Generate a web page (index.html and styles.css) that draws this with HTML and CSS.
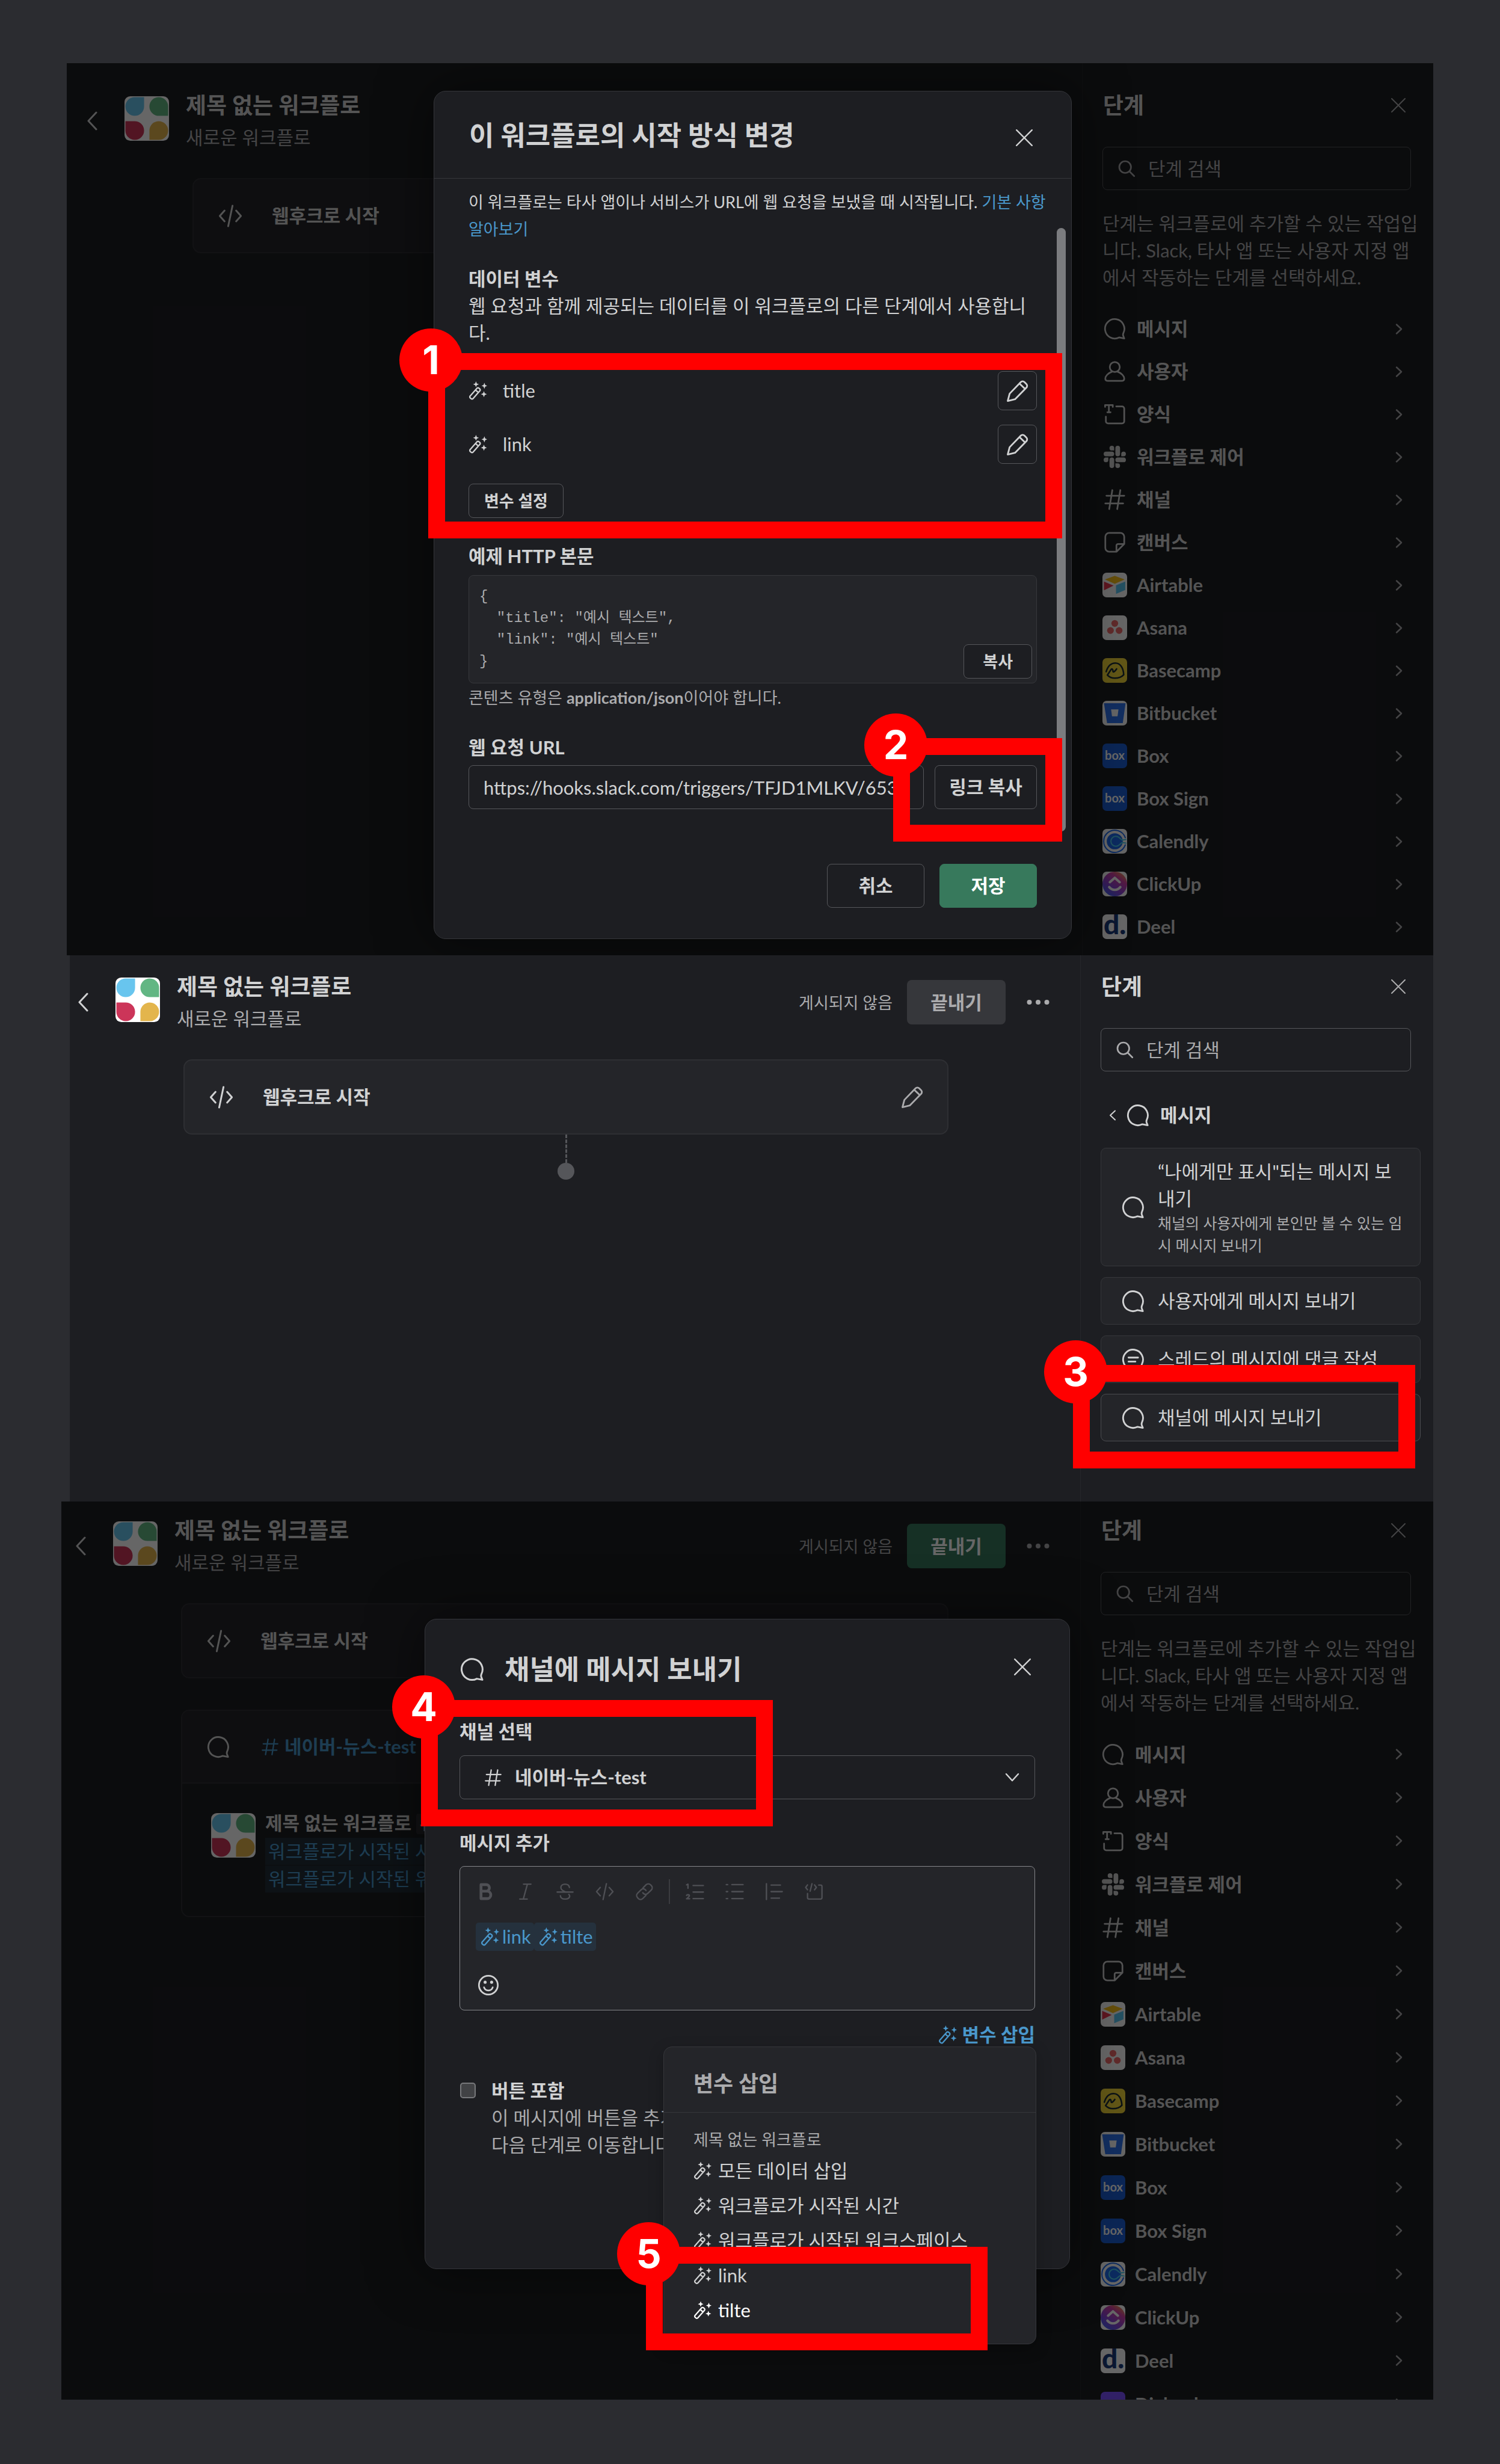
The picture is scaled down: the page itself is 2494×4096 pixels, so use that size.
FILE: index.html
```html
<!DOCTYPE html>
<html lang="ko">
<head>
<meta charset="utf-8">
<meta name="viewport" content="width=device-width, initial-scale=1">
<title>Slack 워크플로 설정</title>
<link rel="stylesheet" href="styles.css">
</head>
<body>
<svg class="sprite" aria-hidden="true">
  <symbol id="i-back" viewBox="0 0 20 32"><path d="M17 2 4 16l13 14"/></symbol>
  <symbol id="i-next" viewBox="0 0 12 20"><path d="m2 2.500 8 7.500-8 7.500"/></symbol>
  <symbol id="i-down" viewBox="0 0 24 16"><path d="m2 2 10 11L22 2"/></symbol>
  <symbol id="i-close" viewBox="0 0 24 24"><path d="m1 1 22 22M23 1 1 23"/></symbol>
  <symbol id="i-search" viewBox="0 0 20 20"><circle cx="8.500" cy="8.500" r="6.500"/><path d="m13.500 13.500 5 5"/></symbol>
  <symbol id="i-code" viewBox="0 0 20 20"><path d="M5.200 5.500 1.200 10l4 4.500M14.800 5.500l4 4.500-4 4.500M11.800 1.500 8.200 18.500"/></symbol>
  <symbol id="i-bubble" viewBox="0 0 20 20"><path d="m18.500 18.700-4.600-.9A8.700 8.700 0 1 1 17.700 14c-.4.900-.4 1.500-.1 2.400z"/></symbol>
  <symbol id="i-thread" viewBox="0 0 20 20"><path d="m18.500 18.700-4.600-.9A8.700 8.700 0 1 1 17.700 14c-.4.900-.4 1.500-.1 2.400z"/><path d="M6 8.300h8.300M6 11.800h6"/></symbol>
  <symbol id="i-user" viewBox="0 0 20 20"><circle cx="10" cy="6" r="4.500"/><path d="M7.500 10.200C4 11.500 1.500 14 1.500 16.500c0 1.300 1 2 2.500 2h12c1.500 0 2.500-.7 2.500-2 0-2.500-2.500-5-6-6.300"/></symbol>
  <symbol id="i-form" viewBox="0 0 20 20"><path d="M1.300 3.500V1.800h6.900v1.700M4.700 1.800v6.400M3.300 8.300h2.900M11.300 3h5.200a2 2 0 0 1 2 2v11.300a2 2 0 0 1-2 2H4a2 2 0 0 1-2-2v-4.100"/></symbol>
  <symbol id="i-slack" viewBox="0 0 24 24"><path class="solid" d="M5.042 15.165a2.528 2.528 0 0 1-2.520 2.523A2.528 2.528 0 0 1 0 15.165a2.527 2.527 0 0 1 2.522-2.520h2.520v2.520zM6.313 15.165a2.527 2.527 0 0 1 2.521-2.520 2.527 2.527 0 0 1 2.521 2.520v6.313A2.528 2.528 0 0 1 8.834 24a2.528 2.528 0 0 1-2.521-2.522v-6.313zM8.834 5.042a2.528 2.528 0 0 1-2.521-2.520A2.528 2.528 0 0 1 8.834 0a2.528 2.528 0 0 1 2.521 2.522v2.520H8.834zM8.834 6.313a2.528 2.528 0 0 1 2.521 2.521 2.528 2.528 0 0 1-2.521 2.521H2.522A2.528 2.528 0 0 1 0 8.834a2.528 2.528 0 0 1 2.522-2.521h6.312zM18.956 8.834a2.528 2.528 0 0 1 2.522-2.521A2.528 2.528 0 0 1 24 8.834a2.528 2.528 0 0 1-2.522 2.521h-2.522V8.834zM17.688 8.834a2.528 2.528 0 0 1-2.523 2.521 2.527 2.527 0 0 1-2.520-2.521V2.522A2.527 2.527 0 0 1 15.165 0a2.528 2.528 0 0 1 2.523 2.522v6.312zM15.165 18.956a2.528 2.528 0 0 1 2.523 2.522A2.528 2.528 0 0 1 15.165 24a2.527 2.527 0 0 1-2.520-2.522v-2.522h2.520zM15.165 17.688a2.527 2.527 0 0 1-2.520-2.523 2.526 2.526 0 0 1 2.520-2.520h6.313A2.527 2.527 0 0 1 24 15.165a2.528 2.528 0 0 1-2.522 2.523h-6.313z"/></symbol>
  <symbol id="i-hash" viewBox="0 0 20 20"><path d="M7.800 1.500 5 18.500M15 1.500l-2.800 17M2.500 6.500h16M1.500 13.500h16"/></symbol>
  <symbol id="i-canvas" viewBox="0 0 20 20"><path d="M18.500 11.500V5a3.500 3.500 0 0 0-3.500-3.500H5A3.500 3.500 0 0 0 1.500 5v10A3.500 3.500 0 0 0 5 18.500h6.500l7-7H13a1.500 1.500 0 0 0-1.500 1.500v5.500"/></symbol>
  <symbol id="i-wand" viewBox="0 0 20 20"><path d="M1.800 15.600 9 7.400a1.500 1.500 0 0 1 2.200-.1l.8.700a1.500 1.500 0 0 1 .1 2.200L4.900 18.400a1.500 1.500 0 0 1-2.200.1l-.8-.7a1.500 1.500 0 0 1-.1-2.200zM7.600 9.200l2.900 2.600"/><path class="solid" d="M8 0l.9 2.200 2.200.9-2.200.9L8 6.200 7.100 4l-2.200-.9 2.200-.9zM17 1.500l.9 2.300 2.100.9-2.100.9L17 8l-.9-2.400-2.200-.9 2.200-.9zM16.500 10.500l.9 2.300 2.300.9-2.300.9-.9 2.300-.9-2.300-2.300-.9 2.300-.9z"/></symbol>
  <symbol id="i-pencil" viewBox="0 0 20 20"><path d="M3 12.300 12.700 2.200a2.300 2.300 0 0 1 3.300 0l1.600 1.600a2.300 2.300 0 0 1 0 3.300L7.700 17.200 1.300 18.700zM11.700 3.500l4.800 4.700"/></symbol>
  <symbol id="i-dots" viewBox="0 0 40 10"><g class="solid"><circle cx="5.500" cy="5" r="4"/><circle cx="20" cy="5" r="4"/><circle cx="34.500" cy="5" r="4"/></g></symbol>
  <symbol id="i-bold" viewBox="0 0 20 20"><path d="M5 2.500v15h6.500a4 4 0 0 0 0-8H5h5.500a3.500 3.500 0 0 0 0-7z"/></symbol>
  <symbol id="i-italic" viewBox="0 0 20 20"><path d="M8 2h8M4 18h8M12.200 2 7.800 18"/></symbol>
  <symbol id="i-strike" viewBox="0 0 20 20"><path d="M14.700 5.500C14.300 3.200 12.500 2 10 2 7.300 2 5.500 3.500 5.500 5.700c0 2.400 2 3.500 4.500 4.300M1.500 10.500h17M14 13c.8.700 1 1.200 1 2-.3 2-2.200 3-5 3s-4.800-1.300-5-3.600"/></symbol>
  <symbol id="i-link" viewBox="0 0 20 20"><path d="m8.300 6.200 3.400-3.500a3.400 3.400 0 0 1 4.900 0l.7.800a3.400 3.400 0 0 1 0 4.800l-3.700 3.600a3.400 3.400 0 0 1-4.800 0l-.6-.7M11.600 14l-3.400 3.400a3.400 3.400 0 0 1-4.800 0l-.8-.9a3.400 3.400 0 0 1 0-4.700l3.700-3.700a3.400 3.400 0 0 1 4.800 0l.6.700"/></symbol>
  <symbol id="i-ol" viewBox="0 0 20 20"><path d="M8 3.500h11M8 10.500h11M8 17.500h11M1 2.700 2.500 2v4.500M1 14c.8-1 3-.8 3 .4 0 1-1.300 1.800-3 3.300h3.300"/></symbol>
  <symbol id="i-ul" viewBox="0 0 20 20"><path d="M7 2.500h12M7 10h12M7 17.500h12M1 2.500h1.500M1 10h1.500M1 17.500h1.500"/></symbol>
  <symbol id="i-quote" viewBox="0 0 20 20"><path d="M1.500 1.500v17M6.500 3h10M6.500 10h12M6.500 17h9"/></symbol>
  <symbol id="i-block" viewBox="0 0 20 20"><path d="M3 2.800 1 5.500 3 8M10.500 2.800l2 2.700-2 2.500M7.800 1.500 5.800 9.500M15 3h2a1.500 1.500 0 0 1 1.500 1.500v12A1.500 1.500 0 0 1 17 18H4.500A1.500 1.500 0 0 1 3 16.500V12"/></symbol>
  <symbol id="i-smile" viewBox="0 0 20 20"><circle cx="10" cy="10" r="8.700"/><path d="M6 12c.6 1.900 2.100 2.900 4 2.900s3.400-1 4-2.900"/><g class="solid"><circle cx="7" cy="7.300" r="1.400"/><circle cx="13" cy="7.300" r="1.400"/></g></symbol>
  <symbol id="logo" viewBox="0 0 100 100"><rect width="100" height="100" rx="13" fill="#fff"/><path fill="#68c5ee" d="M23 2h21v21a21 21 0 1 1-21-21z"/><path fill="#62b683" d="M77 2a21 21 0 0 1 21 21v21H77a21 21 0 0 1 0-42z"/><path fill="#cc3559" d="M2 56h20a21 21 0 1 1-20 21z"/><path fill="#e3b54c" d="M77 56a21 21 0 1 1 0 42H56V77a21 21 0 0 1 21-21z"/></symbol>
  <symbol id="a-airtable" viewBox="0 0 40 40"><rect width="40" height="40" fill="#fff"/><path fill="#fcc21b" d="M4 11 20 5l16 6-16 7z"/><path fill="#5ac8f5" d="M22 20.500 37 14.500V28l-15 6.500z"/><path fill="#e8384f" d="M2.500 14.500 18 21 2.500 28.500z"/></symbol>
  <symbol id="a-asana" viewBox="0 0 40 40"><rect width="40" height="40" fill="#fff"/><g fill="#f06a6a"><circle cx="20" cy="13" r="5.500"/><circle cx="13" cy="24.500" r="5.500"/><circle cx="27" cy="24.500" r="5.500"/></g></symbol>
  <symbol id="a-basecamp" viewBox="0 0 40 40"><rect width="40" height="40" fill="#f5d93a"/><path fill="none" stroke="#1d2d35" stroke-width="2.500" stroke-linecap="round" stroke-linejoin="round" d="M6 22C9 12 15 8 21 8c8 0 13 8 13.500 19C31 31 26 32.500 20 32.500S11 31 8 27.500l6-9c2-2 3 0 3 2.500s2 2 6-3.500"/></symbol>
  <symbol id="a-bitbucket" viewBox="0 0 40 40"><rect width="40" height="40" fill="#fff"/><path fill="#2f74f0" d="M2.500 4h35l-4.500 32H7.500z"/><path fill="#fff" d="M14 14h12l-1.500 11h-9z"/></symbol>
  <symbol id="a-calendly" viewBox="0 0 40 40"><rect width="40" height="40" fill="#fff"/><circle cx="20" cy="20" r="13" fill="#1f6cf0"/><path fill="none" stroke="#1f6cf0" stroke-width="2" d="M37 14A18 18 0 1 0 37 26"/><path fill="none" stroke="#4fd0ee" stroke-width="2" d="m38 17-6 1-5-4a8 8 0 1 0 0 12l5-4 6 1"/></symbol>
  <symbol id="a-clickup" viewBox="0 0 40 40"><linearGradient id="cu" x1="1" y1="0" x2="0.300" y2="1"><stop offset="0" stop-color="#ffb02e"/><stop offset=".35" stop-color="#d13fa8"/><stop offset=".7" stop-color="#8a45d8"/><stop offset="1" stop-color="#4a5cf0"/></linearGradient><rect width="40" height="40" fill="#fff"/><circle cx="20" cy="20" r="20" fill="url(#cu)"/><path fill="none" stroke="#fff" stroke-width="4" d="m12 17 8-7 8 7M11 25c5 6 13 6 18 0"/></symbol>
</svg>

<main class="guide">

<section class="panel panel-one">
  <div class="canvas">
    <header class="flow-head">
      <button class="icon-btn back" aria-label="뒤로"><svg><use href="#i-back"/></svg></button>
      <svg class="flow-logo"><use href="#logo"/></svg>
      <div class="flow-name"><h2>제목 없는 워크플로</h2><p>새로운 워크플로</p></div>
    </header>
    <div class="cards">
      <article class="card"><div class="card-row"><svg class="card-icon"><use href="#i-code"/></svg><strong>웹후크로 시작</strong></div></article>
    </div>
  </div>
  <aside class="side">
    <div class="side-head"><h3>단계</h3><button class="icon-btn close" aria-label="닫기"><svg><use href="#i-close"/></svg></button></div>
    <label class="search"><svg><use href="#i-search"/></svg><input type="search" aria-label="단계 검색" placeholder="단계 검색"></label>
    <p class="side-text">단계는 워크플로에 추가할 수 있는 작업입니다. Slack, 타사 앱 또는 사용자 지정 앱에서 작동하는 단계를 선택하세요.</p>
    <ul class="steps">
      <li><span class="glyph"><svg><use href="#i-bubble"/></svg></span>메시지<svg class="next"><use href="#i-next"/></svg></li>
      <li><span class="glyph"><svg><use href="#i-user"/></svg></span>사용자<svg class="next"><use href="#i-next"/></svg></li>
      <li><span class="glyph"><svg><use href="#i-form"/></svg></span>양식<svg class="next"><use href="#i-next"/></svg></li>
      <li><span class="glyph"><svg><use href="#i-slack"/></svg></span>워크플로 제어<svg class="next"><use href="#i-next"/></svg></li>
      <li><span class="glyph"><svg><use href="#i-hash"/></svg></span>채널<svg class="next"><use href="#i-next"/></svg></li>
      <li><span class="glyph"><svg><use href="#i-canvas"/></svg></span>캔버스<svg class="next"><use href="#i-next"/></svg></li>
      <li><svg class="app"><use href="#a-airtable"/></svg>Airtable<svg class="next"><use href="#i-next"/></svg></li>
      <li><svg class="app"><use href="#a-asana"/></svg>Asana<svg class="next"><use href="#i-next"/></svg></li>
      <li><svg class="app"><use href="#a-basecamp"/></svg>Basecamp<svg class="next"><use href="#i-next"/></svg></li>
      <li><svg class="app"><use href="#a-bitbucket"/></svg>Bitbucket<svg class="next"><use href="#i-next"/></svg></li>
      <li><span class="app app-box">box</span>Box<svg class="next"><use href="#i-next"/></svg></li>
      <li><span class="app app-box">box</span>Box Sign<svg class="next"><use href="#i-next"/></svg></li>
      <li><svg class="app"><use href="#a-calendly"/></svg>Calendly<svg class="next"><use href="#i-next"/></svg></li>
      <li><svg class="app"><use href="#a-clickup"/></svg>ClickUp<svg class="next"><use href="#i-next"/></svg></li>
      <li><span class="app app-deel">d.</span>Deel<svg class="next"><use href="#i-next"/></svg></li>
    </ul>
  </aside>
  <div class="overlay">
    <div class="modal modal-start" role="dialog" aria-labelledby="m1">
      <header class="modal-head ruled"><h1 id="m1">이 워크플로의 시작 방식 변경</h1><button class="icon-btn close big" aria-label="닫기"><svg><use href="#i-close"/></svg></button></header>
      <div class="modal-body">
        <p class="small intro">이 워크플로는 타사 앱이나 서비스가 URL에 웹 요청을 보냈을 때 시작됩니다. <a href="#basics">기본 사항 알아보기</a></p>
        <h4 class="label gap-top">데이터 변수</h4>
        <p class="text">웹 요청과 함께 제공되는 데이터를 이 워크플로의 다른 단계에서 사용합니다.</p>
        <ul class="vars">
          <li><svg class="wand"><use href="#i-wand"/></svg><span>title</span><button class="btn edit" aria-label="title 편집"><svg><use href="#i-pencil"/></svg></button></li>
          <li><svg class="wand"><use href="#i-wand"/></svg><span>link</span><button class="btn edit" aria-label="link 편집"><svg><use href="#i-pencil"/></svg></button></li>
        </ul>
        <button class="btn btn-small">변수 설정</button>
        <h4 class="label gap-example">예제 HTTP 본문</h4>
        <div class="code-box"><pre>{
  "title": "예시 텍스트",
  "link": "예시 텍스트"
}</pre><button class="btn btn-small btn-copy">복사</button></div>
        <p class="small note">콘텐츠 유형은 <strong>application/json</strong>이어야 합니다.</p>
        <label class="label gap-top" for="hook-url">웹 요청 URL</label>
        <div class="url-row"><input id="hook-url" class="field" type="text" readonly value="https://hooks.slack.com/triggers/TFJD1MLKV/653"><button class="btn btn-link">링크 복사</button></div>
      </div>
      <footer class="modal-foot"><button class="btn wide">취소</button><button class="btn wide primary">저장</button></footer>
      <div class="scrollbar"></div>
      <div class="callout callout-1"><span>1</span></div>
      <div class="callout callout-2"><span>2</span></div>
    </div>
  </div>
</section>

<section class="panel panel-two">
  <div class="canvas">
    <header class="flow-head">
      <button class="icon-btn back" aria-label="뒤로"><svg><use href="#i-back"/></svg></button>
      <svg class="flow-logo"><use href="#logo"/></svg>
      <div class="flow-name"><h2>제목 없는 워크플로</h2><p>새로운 워크플로</p></div>
      <div class="flow-actions"><span class="status">게시되지 않음</span><button class="finish" disabled>끝내기</button><button class="icon-btn more" aria-label="더 보기"><svg><use href="#i-dots"/></svg></button></div>
    </header>
    <div class="cards">
      <article class="card"><div class="card-row"><svg class="card-icon"><use href="#i-code"/></svg><strong>웹후크로 시작</strong><button class="icon-btn card-edit" aria-label="편집"><svg><use href="#i-pencil"/></svg></button></div></article>
      <div class="connector"><i></i><b></b></div>
    </div>
  </div>
  <aside class="side">
    <div class="side-head"><h3>단계</h3><button class="icon-btn close" aria-label="닫기"><svg><use href="#i-close"/></svg></button></div>
    <label class="search"><svg><use href="#i-search"/></svg><input type="search" aria-label="단계 검색" placeholder="단계 검색"></label>
    <div class="crumb"><svg class="prev"><use href="#i-next"/></svg><svg class="ico"><use href="#i-bubble"/></svg>메시지</div>
    <ul class="options">
      <li><svg class="ico"><use href="#i-bubble"/></svg><div>“나에게만 표시"되는 메시지 보내기<small>채널의 사용자에게 본인만 볼 수 있는 임시 메시지 보내기</small></div></li>
      <li><svg class="ico"><use href="#i-bubble"/></svg><div>사용자에게 메시지 보내기</div></li>
      <li><svg class="ico"><use href="#i-thread"/></svg><div>스레드의 메시지에 댓글 작성</div></li>
      <li class="current"><svg class="ico"><use href="#i-bubble"/></svg><div>채널에 메시지 보내기</div></li>
    </ul>
    <div class="callout callout-3"><span>3</span></div>
  </aside>
</section>

<section class="panel panel-three">
  <div class="canvas">
    <header class="flow-head">
      <button class="icon-btn back" aria-label="뒤로"><svg><use href="#i-back"/></svg></button>
      <svg class="flow-logo"><use href="#logo"/></svg>
      <div class="flow-name"><h2>제목 없는 워크플로</h2><p>새로운 워크플로</p></div>
      <div class="flow-actions"><span class="status">게시되지 않음</span><button class="finish ready">끝내기</button><button class="icon-btn more" aria-label="더 보기"><svg><use href="#i-dots"/></svg></button></div>
    </header>
    <div class="cards">
      <article class="card"><div class="card-row"><svg class="card-icon"><use href="#i-code"/></svg><strong>웹후크로 시작</strong></div></article>
      <article class="card card-message">
        <div class="card-row"><svg class="card-icon"><use href="#i-bubble"/></svg><strong><a href="#channel"><svg class="hash"><use href="#i-hash"/></svg>네이버-뉴스-test</a> 에</strong></div>
        <div class="preview">
          <svg class="flow-logo"><use href="#logo"/></svg>
          <div><p class="sender">제목 없는 워크플로 <em>워크플로</em></p><p class="token">워크플로가 시작된 시간</p><p class="token">워크플로가 시작된 워크</p></div>
        </div>
      </article>
    </div>
  </div>
  <aside class="side">
    <div class="side-head"><h3>단계</h3><button class="icon-btn close" aria-label="닫기"><svg><use href="#i-close"/></svg></button></div>
    <label class="search"><svg><use href="#i-search"/></svg><input type="search" aria-label="단계 검색" placeholder="단계 검색"></label>
    <p class="side-text">단계는 워크플로에 추가할 수 있는 작업입니다. Slack, 타사 앱 또는 사용자 지정 앱에서 작동하는 단계를 선택하세요.</p>
    <ul class="steps">
      <li><span class="glyph"><svg><use href="#i-bubble"/></svg></span>메시지<svg class="next"><use href="#i-next"/></svg></li>
      <li><span class="glyph"><svg><use href="#i-user"/></svg></span>사용자<svg class="next"><use href="#i-next"/></svg></li>
      <li><span class="glyph"><svg><use href="#i-form"/></svg></span>양식<svg class="next"><use href="#i-next"/></svg></li>
      <li><span class="glyph"><svg><use href="#i-slack"/></svg></span>워크플로 제어<svg class="next"><use href="#i-next"/></svg></li>
      <li><span class="glyph"><svg><use href="#i-hash"/></svg></span>채널<svg class="next"><use href="#i-next"/></svg></li>
      <li><span class="glyph"><svg><use href="#i-canvas"/></svg></span>캔버스<svg class="next"><use href="#i-next"/></svg></li>
      <li><svg class="app"><use href="#a-airtable"/></svg>Airtable<svg class="next"><use href="#i-next"/></svg></li>
      <li><svg class="app"><use href="#a-asana"/></svg>Asana<svg class="next"><use href="#i-next"/></svg></li>
      <li><svg class="app"><use href="#a-basecamp"/></svg>Basecamp<svg class="next"><use href="#i-next"/></svg></li>
      <li><svg class="app"><use href="#a-bitbucket"/></svg>Bitbucket<svg class="next"><use href="#i-next"/></svg></li>
      <li><span class="app app-box">box</span>Box<svg class="next"><use href="#i-next"/></svg></li>
      <li><span class="app app-box">box</span>Box Sign<svg class="next"><use href="#i-next"/></svg></li>
      <li><svg class="app"><use href="#a-calendly"/></svg>Calendly<svg class="next"><use href="#i-next"/></svg></li>
      <li><svg class="app"><use href="#a-clickup"/></svg>ClickUp<svg class="next"><use href="#i-next"/></svg></li>
      <li><span class="app app-deel">d.</span>Deel<svg class="next"><use href="#i-next"/></svg></li>
      <li><span class="app app-dialpad"></span>Dialpad<svg class="next"><use href="#i-next"/></svg></li>
    </ul>
  </aside>
  <div class="overlay">
    <div class="modal modal-message" role="dialog" aria-labelledby="m2">
      <header class="modal-head"><svg class="ico"><use href="#i-bubble"/></svg><h1 id="m2">채널에 메시지 보내기</h1><button class="icon-btn close big" aria-label="닫기"><svg><use href="#i-close"/></svg></button></header>
      <div class="modal-body">
        <label class="label" for="channel-select">채널 선택</label>
        <div class="select"><svg class="hash"><use href="#i-hash"/></svg><select id="channel-select"><option>네이버-뉴스-test</option></select><svg class="caret"><use href="#i-down"/></svg></div>
        <h4 class="label" id="msg-label">메시지 추가</h4>
        <div class="editor">
          <div class="toolbar">
            <button aria-label="굵게"><svg class="heavy"><use href="#i-bold"/></svg></button>
            <button aria-label="기울임꼴"><svg><use href="#i-italic"/></svg></button>
            <button aria-label="취소선"><svg><use href="#i-strike"/></svg></button>
            <button aria-label="코드"><svg><use href="#i-code"/></svg></button>
            <button aria-label="링크"><svg><use href="#i-link"/></svg></button>
            <span class="rule"></span>
            <button aria-label="번호 목록"><svg><use href="#i-ol"/></svg></button>
            <button aria-label="글머리 기호 목록"><svg><use href="#i-ul"/></svg></button>
            <button aria-label="인용"><svg><use href="#i-quote"/></svg></button>
            <button aria-label="코드 블록"><svg><use href="#i-block"/></svg></button>
          </div>
          <div class="chips" role="textbox" aria-labelledby="msg-label"><span><svg class="wand"><use href="#i-wand"/></svg>link</span><span><svg class="wand"><use href="#i-wand"/></svg>tilte</span></div>
          <button class="icon-btn emoji" aria-label="이모티콘"><svg><use href="#i-smile"/></svg></button>
        </div>
        <div class="insert">
          <button class="insert-link"><svg class="wand"><use href="#i-wand"/></svg>변수 삽입</button>
          <div class="popover">
            <h5>변수 삽입</h5>
            <div class="menu">
              <p>제목 없는 워크플로</p>
              <ul>
                <li><svg class="wand"><use href="#i-wand"/></svg>모든 데이터 삽입</li>
                <li><svg class="wand"><use href="#i-wand"/></svg>워크플로가 시작된 시간</li>
                <li><svg class="wand"><use href="#i-wand"/></svg>워크플로가 시작된 워크스페이스</li>
                <li><svg class="wand"><use href="#i-wand"/></svg>link</li>
                <li class="active"><svg class="wand"><use href="#i-wand"/></svg>tilte</li>
              </ul>
            </div>
          </div>
        </div>
        <div class="check"><input type="checkbox" id="with-button"><div><label for="with-button">버튼 포함</label><p>이 메시지에 버튼을 추가합니다.<br>다음 단계로 이동합니다.</p></div></div>
      </div>
      <div class="callout callout-4"><span>4</span></div>
      <div class="callout callout-5"><span>5</span></div>
    </div>
  </div>
</section>

</main>
</body>
</html>
```

FILE: styles.css
```css
:root {
  --page: #2b2c30;
  --panel: #1d1e22;
  --raised: #242529;
  --line: #36373b;
  --field-line: #56575b;
  --text: #d1d2d3;
  --muted: #ababad;
  --blue: #4a98cc;
  --green: #37795c;
  --red: #ff0000;
}

* { box-sizing: border-box; }

body {
  margin: 0;
  background: var(--page);
  color: var(--text);
  font: 31px/45px Lato, "Noto Sans CJK KR", sans-serif;
}

h1, h2, h3, h4, h5, p, ul, pre { margin: 0; padding: 0; }
ul { list-style: none; }
a { color: var(--blue); text-decoration: none; }

button, input, select {
  margin: 0;
  padding: 0;
  border: 0;
  background: none;
  color: inherit;
  font: inherit;
}

svg {
  flex: none;
  display: block;
  overflow: hidden;
  fill: none;
  stroke: currentColor;
  stroke-width: 1.5;
  stroke-linecap: round;
  stroke-linejoin: round;
}
.solid { fill: currentColor; stroke: none; }
.sprite { position: absolute; width: 0; height: 0; }
.flow-logo, svg.app { stroke: none; }

.guide { padding: 105px 111px 106px 102px; }

/* ---------- panels ---------- */
.panel {
  --top: 0px;
  --pad: 17px;
  --side: 587px;
  --row: 72px;
  display: grid;
  grid-template-columns: minmax(0, 1fr) var(--side);
  background: var(--panel);
  overflow: hidden;
}
.panel-one { --top: 22px; --pad: 27px; --side: 584px; --row: 71px; margin-left: 9px; }
.panel-two { --top: 4px; --pad: 7px; margin-left: 14px; }
.panel-three { height: 1493px; }

.canvas { grid-area: 1 / 1; padding-top: var(--top); min-width: 0; }

.overlay {
  grid-area: 1 / 1 / 2 / 3;
  display: flex;
  align-items: flex-start;
  justify-content: center;
  background: rgba(0, 0, 0, 0.6);
  z-index: 1;
}
.panel-one .overlay { padding: 46px 0 25px 9px; }
.panel-three .overlay { padding-top: 195px; }

.icon-btn { display: flex; align-items: center; justify-content: center; flex: none; }

/* ---------- workflow header ---------- */
.flow-head {
  display: flex;
  align-items: center;
  padding: 21px 50px 0 var(--pad);
}
.back { width: 30px; margin-right: 39px; }
.back svg { width: 20px; height: 32px; stroke-width: 3; }
.flow-logo { width: 74px; height: 74px; }
.flow-head .flow-logo { margin-bottom: 8px; }
.flow-name { margin-left: 28px; }
.flow-name h2 { font-size: 37px; line-height: 54px; }
.flow-name p { line-height: 52px; color: var(--muted); }
.flow-actions { display: flex; align-items: center; margin-left: auto; }
.status { font-size: 27px; color: var(--muted); }
.finish {
  width: 164px;
  height: 74px;
  margin: 0 34px 0 24px;
  border-radius: 8px;
  background: #36373b;
  color: var(--muted);
  font-weight: 700;
}
.finish.ready { background: var(--green); color: #fff; }
.more svg { width: 40px; height: 10px; color: var(--muted); }

/* ---------- cards ---------- */
.cards { padding: 42px 219px 0 calc(var(--pad) + 182px); }
.card {
  border: 2px solid #2e2f33;
  border-radius: 14px;
  background: var(--raised);
}
.card-row { display: flex; align-items: center; height: 121px; padding: 0 39px 0 41px; }
.card-icon { width: 40px; height: 40px; margin-right: 49px; }
.card-edit { margin-left: auto; color: var(--muted); }
.card-edit svg { width: 38px; height: 38px; }
.connector { display: flex; flex-direction: column; align-items: center; }
.connector i { height: 47px; border-left: 3px dashed #55565a; }
.connector b { width: 28px; height: 28px; border-radius: 50%; background: #55565a; }

.card-message { margin-top: 52px; background: none; overflow: hidden; }
.card-message .card-row { background: var(--raised); border-bottom: 2px solid #2e2f33; }
.card-message .card-icon { width: 38px; height: 38px; margin: 0 52px 0 0; }
.card-message strong, .card-message a { display: flex; align-items: center; gap: 9px; }
.hash { width: 30px; height: 36px; }
.preview { display: flex; gap: 16px; padding: 49px 0 39px 48px; }
.preview > div { flex: 1; min-width: 0; margin-top: -6px; }
.sender { font-weight: 700; }
.sender em { padding: 2px 6px; border-radius: 4px; background: #2e2f33; font-size: 25px; font-style: normal; color: var(--muted); }
.token { width: 380px; padding-left: 5px; background: #212f39; color: var(--blue); white-space: nowrap; overflow: hidden; }
.token + .token { margin-top: 1px; }

/* ---------- sidebar ---------- */
.side {
  grid-area: 1 / 2;
  position: relative;
  min-width: 0;
  padding: calc(var(--top) + 21px) 37px 12px 33px;
  border-left: 1px solid #26272b;
}
.side-head { display: flex; align-items: center; justify-content: space-between; padding: 0 9px 0 1px; }
.side-head h3 { font-size: 37px; line-height: 54px; }
.close svg { width: 24px; height: 24px; stroke-width: 2; color: var(--muted); }
.close.big svg { width: 28px; height: 28px; color: var(--text); }
.search {
  display: flex;
  align-items: center;
  gap: 21px;
  height: 72px;
  margin-top: 42px;
  padding: 0 24px;
  border: 1px solid var(--field-line);
  border-radius: 8px;
  color: var(--muted);
}
.search svg { width: 30px; height: 30px; stroke-width: 1.8; }
.search input { flex: 1; min-width: 0; outline: 0; appearance: none; }
.search input::placeholder { color: var(--muted); opacity: 1; }
.side-text { margin: 33px -16px 0 0; color: var(--muted); }
.steps { margin-top: 27px; font-weight: 700; }
.steps li { display: flex; align-items: center; height: var(--row); gap: 16px; padding-right: 14px; }
.glyph { display: flex; justify-content: center; flex: none; width: 41px; }
.glyph svg { width: 37px; height: 37px; }
.next { width: 12px; height: 20px; margin-left: auto; stroke-width: 2.5; color: var(--muted); }
.app { flex: none; width: 41px; height: 41px; border-radius: 7px; }
.app-box { background: #1c5fd6; color: #fff; font-size: 20px; line-height: 39px; text-align: center; }
.app-deel { background: #fff; color: #1b3a7a; font-size: 46px; line-height: 32px; font-weight: 900; text-align: center; overflow: hidden; }
.app-dialpad { background: #7c52ff; }

.crumb { display: flex; align-items: center; margin-top: 50px; padding-left: 14px; font-weight: 700; }
.prev { width: 12px; height: 20px; margin-right: 17px; transform: scaleX(-1); stroke-width: 2; }
.ico { width: 38px; height: 38px; }
.crumb .ico { margin-right: 18px; }
.options { display: grid; gap: 18px; margin: 32px -16px 88px 0; }
.options li {
  display: flex;
  align-items: center;
  gap: 22px;
  padding: 16px 24px 16px 34px;
  border: 1px solid var(--line);
  border-radius: 9px;
  background: var(--raised);
}
.options li.current { border-color: #4b4c50; }
.options li:first-child { padding-bottom: 15px; }
.options small { display: block; font-size: 25px; line-height: 37px; color: var(--muted); }

/* ---------- dialogs ---------- */
.modal {
  position: relative;
  max-width: 100%;
  border: 1px solid #34353a;
  border-radius: 20px;
  background: var(--panel);
  box-shadow: 0 0 90px rgba(0, 0, 0, 0.5);
}
.modal-start { width: 1061px; }
.modal-message { width: 1073px; padding-bottom: 183px; }
.modal-head { display: flex; align-items: center; padding: 53px 64px 0 58px; }
.modal-head h1 { font-size: 45px; line-height: 60px; }
.modal-head .close { margin: 0 0 8px auto; }
.modal-head .ico { width: 40px; height: 40px; margin-right: 34px; }
.modal-head.ruled { padding-top: 43px; padding-bottom: 41px; border-bottom: 1px solid var(--line); }
.modal-head.ruled .close { margin: 8px 0 0 auto; }
.modal-body { padding: 16px 57px 0; }
.modal-message .modal-body { padding-top: 51px; }

.small { font-size: 27px; }
.intro { margin-right: -16px; }
.label { display: block; font-size: 31px; font-weight: 700; }
.gap-top { margin-top: 38px; }
.gap-example { margin-top: 41px; }
.btn {
  border: 1px solid var(--field-line);
  border-radius: 8px;
  background: var(--panel);
  font-weight: 700;
}
.btn-small { height: 57px; padding: 0 25px; font-size: 27px; }
.wand { width: 31px; height: 31px; }
.vars { display: grid; gap: 24px; margin: 41px 0 33px; }
.vars li { display: flex; align-items: center; gap: 26px; height: 65px; }
.edit { display: flex; align-items: center; justify-content: center; width: 65px; height: 65px; margin-left: auto; }
.edit svg { width: 38px; height: 38px; }
.code-box {
  display: flex;
  align-items: flex-end;
  justify-content: space-between;
  margin-top: 9px;
  padding: 17px 7px 17px 17px;
  border: 1px solid var(--line);
  border-radius: 8px;
  background: var(--raised);
  color: var(--muted);
}
.code-box pre { font: 24px/36px "Liberation Mono", "Noto Sans CJK KR", monospace; }
.btn-copy { margin-bottom: -10px; padding: 0 31px; color: var(--text); }
.note { margin: 1px 0 2px; color: var(--muted); }
.url-row { display: flex; gap: 18px; margin-top: 7px; }
.field {
  flex: 1;
  min-width: 0;
  height: 73px;
  padding: 0 24px;
  border: 1px solid var(--field-line);
  border-radius: 8px;
}
.btn-link { width: 170px; }
.modal-foot { display: flex; justify-content: flex-end; gap: 25px; padding: 91px 57px 51px; }
.wide { width: 162px; height: 73px; }
.primary { border-color: var(--green); background: var(--green); color: #fff; }
.scrollbar {
  position: absolute;
  top: 227px;
  right: 9px;
  width: 15px;
  height: 1003px;
  border-radius: 8px;
  background: #7b7c7f;
}

.select {
  display: flex;
  align-items: center;
  height: 73px;
  margin: 17px 0 50px;
  padding: 0 25px 0 40px;
  border: 1px solid var(--field-line);
  border-radius: 8px;
}
.select select { flex: 1; margin-left: 21px; appearance: none; outline: 0; font-weight: 700; }
.caret { width: 24px; height: 16px; stroke-width: 2.5; }
.editor {
  height: 240px;
  margin-top: 16px;
  padding: 21px 9px;
  border: 1px solid #85868a;
  border-radius: 8px;
  background: var(--raised);
}
.toolbar { display: flex; align-items: center; height: 41px; color: #4f5055; }
.toolbar button { display: flex; justify-content: center; width: 66px; }
.toolbar svg { width: 31px; height: 31px; }
.toolbar .heavy { stroke-width: 3; }
.rule { width: 2px; height: 41px; margin: 0 8px; background: #3b3c40; }
.chips { display: flex; margin: 31px 0 0 17px; color: var(--blue); }
.chips span { display: flex; align-items: center; gap: 5px; height: 47px; padding: 0 5px 0 8px; border-radius: 5px; background: #25313d; }
.emoji { margin: 39px 0 0 20px; }
.emoji svg { width: 36px; height: 36px; }
.insert { position: relative; display: flex; justify-content: flex-end; margin-top: 18px; }
.insert-link { display: flex; align-items: center; gap: 8px; color: var(--blue); font-weight: 700; }
.popover {
  position: absolute;
  top: 42px;
  right: -2px;
  width: 620px;
  border: 1px solid var(--line);
  border-radius: 14px;
  background: var(--raised);
  box-shadow: 0 8px 24px rgba(0, 0, 0, 0.25);
}
.popover h5 { padding: 35px 49px 23px; border-bottom: 1px solid var(--line); font-size: 36px; line-height: 50px; color: var(--muted); }
.menu { padding: 22px 49px 27px; }
.menu p { font-size: 27px; color: var(--muted); }
.menu li { display: flex; align-items: center; gap: 11px; height: 58px; }
.menu .wand { width: 30px; height: 31px; }
.menu .active { color: #fff; }
.check { display: flex; align-items: flex-start; gap: 26px; margin-top: 48px; }
.check input {
  flex: none;
  width: 26px;
  height: 26px;
  margin: 9px 0 0 1px;
  appearance: none;
  border: 2px solid #77787b;
  border-radius: 5px;
  background: #414245;
}
.check label { display: block; font-weight: 700; }
.check p { color: var(--muted); }

/* ---------- numbered callouts ---------- */
.callout { position: absolute; z-index: 2; border: 28px solid var(--red); pointer-events: none; }
.callout span {
  position: absolute;
  top: -69px;
  left: -76px;
  width: 105px;
  height: 105px;
  border-radius: 50%;
  background: var(--red);
  color: #fff;
  font: 700 66px/105px Inter, sans-serif;
  text-align: center;
}
.callout-1 { left: -10px; top: 435px; width: 1054px; height: 308px; }
.callout-2 { left: 763px; top: 1075px; width: 281px; height: 172px; }
.callout-3 { left: -13px; top: 681px; width: 569px; height: 172px; }
.callout-4 { left: -7px; top: 134px; width: 585px; height: 210px; }
.callout-5 { left: 367px; top: 1043px; width: 568px; height: 172px; }
```
